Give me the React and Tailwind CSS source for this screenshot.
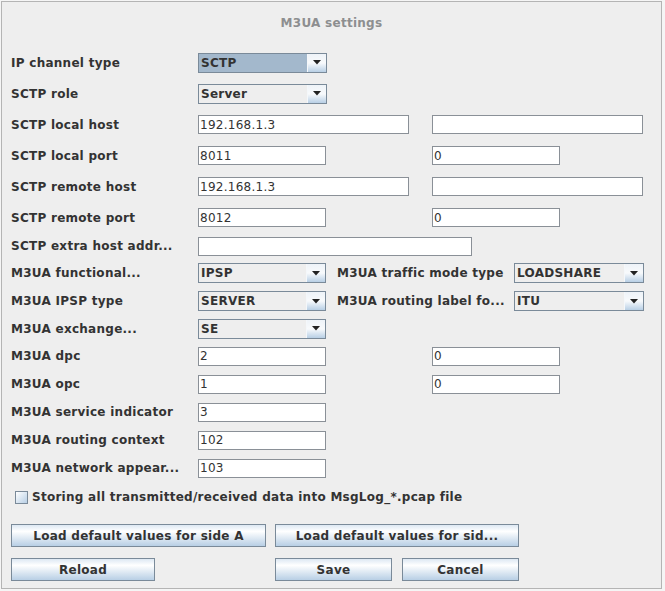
import React from 'react'

function Field({ w, value }) {
  return (
    <div className={`${w} h-[19px] bg-white border border-[#8a9097] flex items-center pl-[1px] text-[12px] text-[#333333] leading-none shrink-0`}>
      {value}
    </div>
  )
}

function Arrow() {
  return (
    <svg width="8" height="5" viewBox="0 0 8 5"><path d="M0 0H8L4 4.5Z" fill="#222"/></svg>
  )
}

function Combo({ w, value, focused }) {
  return (
    <div className={`${w} h-[20px] border border-[#7a8a99] flex shrink-0`}>
      <div className={`flex-1 flex items-center pl-[2px] font-bold text-[12px] text-[#333333] leading-none ${focused ? 'bg-[#a3b8cc]' : 'bg-[#eeeeee]'}`}>
        {value}
      </div>
      <div className="w-[19px] border-l border-[#f4f7fa] flex items-center justify-center bg-gradient-to-b from-[#eef3f8] via-[#f8fafc] to-[#b8cfe5]">
        <Arrow/>
      </div>
    </div>
  )
}

function Btn({ w, children }) {
  return (
    <button className={`${w} h-[23px] border border-[#7a8a99] bg-[linear-gradient(to_bottom,#dde8f3_0%,#ffffff_30%,#b8cfe5_100%)] font-bold text-[12px] text-[#333333] leading-none flex items-center justify-center shrink-0`}>
      {children}
    </button>
  )
}

function Label({ children }) {
  return <div className="w-[187px] shrink-0 font-bold text-[12px] text-[#333333] whitespace-nowrap">{children}</div>
}

export default function App() {
  return (
    <div className="w-[665px] h-[591px] bg-[#f5f5f5] font-['DejaVu_Sans',sans-serif] tracking-[0.27px] pt-[1px] pl-[1px]">
      <div className="w-[661px] h-[588px] border border-[#b4b4b4] bg-[#eeeeee] flex flex-col">
        <div className="h-[45px] pt-[12px] text-center font-bold text-[12px] leading-[18px] text-[#8d8e90]">M3UA settings</div>

        <div className="flex flex-col pl-[9px]">
          <div className="h-[31px] flex items-center"><Label>IP channel type</Label><Combo w="w-[129px]" value="SCTP" focused/></div>
          <div className="h-[31px] flex items-center"><Label>SCTP role</Label><Combo w="w-[129px]" value="Server"/></div>
          <div className="h-[31px] flex items-center"><Label>SCTP local host</Label><Field w="w-[211px]" value="192.168.1.3"/><div className="w-[23px]"/><Field w="w-[211px]"/></div>
          <div className="h-[31px] flex items-center"><Label>SCTP local port</Label><Field w="w-[128px]" value="8011"/><div className="w-[106px]"/><Field w="w-[128px]" value="0"/></div>
          <div className="h-[31px] flex items-center"><Label>SCTP remote host</Label><Field w="w-[211px]" value="192.168.1.3"/><div className="w-[23px]"/><Field w="w-[211px]"/></div>
          <div className="h-[31px] flex items-center"><Label>SCTP remote port</Label><Field w="w-[128px]" value="8012"/><div className="w-[106px]"/><Field w="w-[128px]" value="0"/></div>
          <div className="h-[26px] flex items-center"><Label>SCTP extra host addr...</Label><Field w="w-[274px]"/></div>

          <div className="h-[28px] flex items-center">
            <Label>M3UA functional...</Label><Combo w="w-[128px]" value="IPSP"/>
            <div className="w-[177px] ml-[11px] font-bold text-[12px] text-[#333333] whitespace-nowrap">M3UA traffic mode type</div>
            <Combo w="w-[130px]" value="LOADSHARE"/>
          </div>
          <div className="h-[28px] flex items-center">
            <Label>M3UA IPSP type</Label><Combo w="w-[128px]" value="SERVER"/>
            <div className="w-[177px] ml-[11px] font-bold text-[12px] text-[#333333] whitespace-nowrap">M3UA routing label fo...</div>
            <Combo w="w-[130px]" value="ITU"/>
          </div>
          <div className="h-[27px] flex items-center"><Label>M3UA exchange...</Label><Combo w="w-[128px]" value="SE"/></div>
          <div className="h-[28px] flex items-center"><Label>M3UA dpc</Label><Field w="w-[128px]" value="2"/><div className="w-[106px]"/><Field w="w-[128px]" value="0"/></div>
          <div className="h-[28px] flex items-center"><Label>M3UA opc</Label><Field w="w-[128px]" value="1"/><div className="w-[106px]"/><Field w="w-[128px]" value="0"/></div>
          <div className="h-[28px] flex items-center"><Label>M3UA service indicator</Label><Field w="w-[128px]" value="3"/></div>
          <div className="h-[28px] flex items-center"><Label>M3UA routing context</Label><Field w="w-[128px]" value="102"/></div>
          <div className="h-[28px] flex items-center"><Label>M3UA network appear...</Label><Field w="w-[128px]" value="103"/></div>

          <div className="h-[30px] flex items-center pl-[4px] gap-[4px]">
            <div className="w-[13px] h-[13px] border border-[#7a8a99] bg-gradient-to-br from-[#ffffff] to-[#b8cfe5]"/>
            <span className="font-bold text-[12px] text-[#333333] whitespace-nowrap">Storing all transmitted/received data into MsgLog_*.pcap file</span>
          </div>

          <div className="mt-[12px] flex gap-[9px]">
            <Btn w="w-[255px]">Load default values for side A</Btn>
            <Btn w="w-[244px]">Load default values for sid...</Btn>
          </div>
          <div className="mt-[11px] flex">
            <Btn w="w-[144px]">Reload</Btn>
            <div className="w-[120px]"/>
            <Btn w="w-[117px]">Save</Btn>
            <div className="w-[10px]"/>
            <Btn w="w-[117px]">Cancel</Btn>
          </div>
        </div>
      </div>
    </div>
  )
}
